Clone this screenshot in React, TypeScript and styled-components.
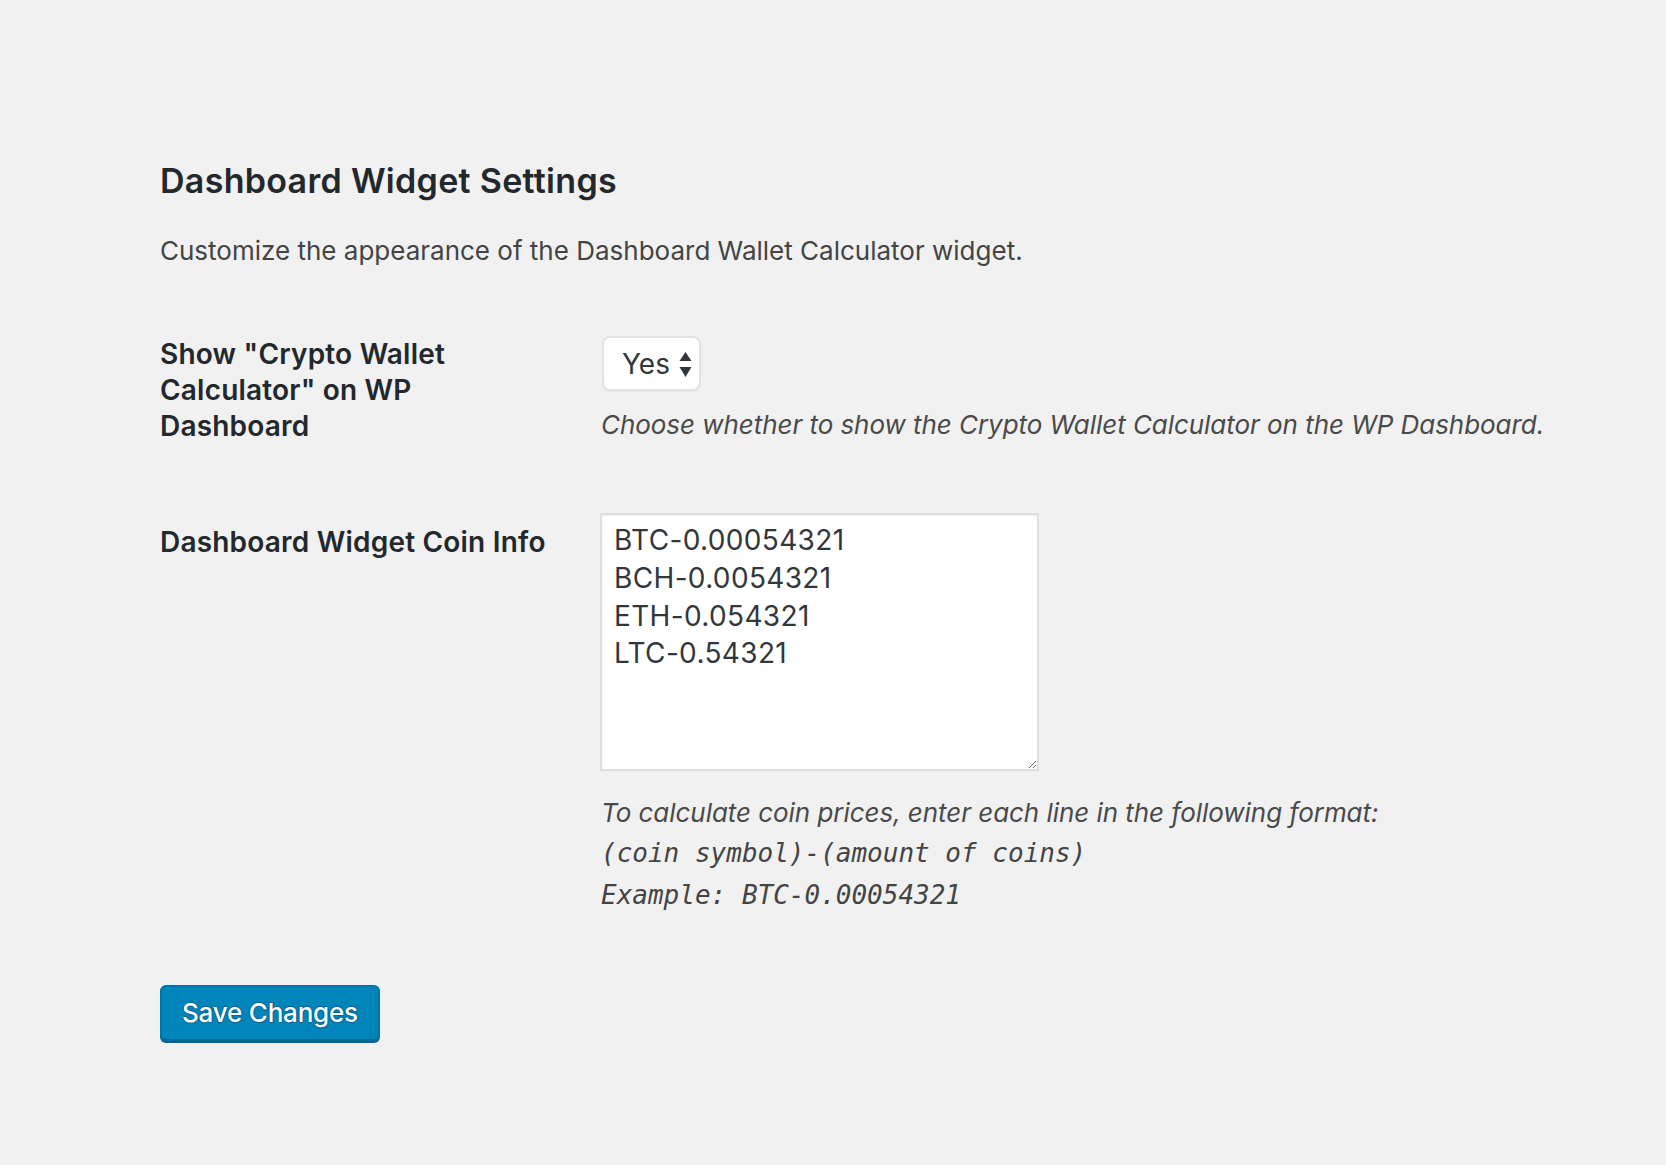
import React from "react";
import styled, { createGlobalStyle } from "styled-components";

const Global = createGlobalStyle`
  html, body {
    margin: 0;
    padding: 0;
    background: #f1f1f1;
  }
  body {
    font-family: Inter, "Noto Sans", "Liberation Sans", sans-serif;
    color: #444;
    -webkit-font-smoothing: antialiased;
  }
`;

const Page = styled.div`
  min-height: 1165px;
  box-sizing: border-box;
  padding: 159px 0 0 160px;
`;

const Title = styled.h2`
  margin: 0;
  font-size: 34px;
  line-height: 44px;
  font-weight: 600;
  color: #23282d;
  letter-spacing: 0.3px;
`;

const Intro = styled.p`
  margin: 28px 0 0;
  font-size: 26px;
  line-height: 39px;
  color: #444;
  letter-spacing: 0;
`;

const Row = styled.div<{ $gap: number }>`
  display: flex;
  align-items: flex-start;
  margin-top: ${(p) => p.$gap}px;
`;

const Label = styled.label<{ $offset: number }>`
  flex: 0 0 391px;
  margin-right: 49px;
  margin-top: ${(p) => p.$offset}px;
  font-size: 28px;
  line-height: 36px;
  font-weight: 600;
  color: #23282d;
  letter-spacing: 0.2px;
`;

const Field = styled.div`
  display: flex;
  flex-direction: column;
  align-items: flex-start;
`;

const SelectBox = styled.div`
  position: relative;
  box-sizing: border-box;
  width: 99px;
  height: 55px;
  margin: 0 0 0 2px;
  padding: 0 0 0 18px;
  display: flex;
  align-items: center;
  background: #fff;
  border: 2px solid #e2e2e2;
  border-radius: 8px;
  box-shadow: 0 1px 1px rgba(0, 0, 0, 0.03);
  font-size: 28px;
  color: #32373c;
`;

const Arrows = styled.svg`
  position: absolute;
  right: 7px;
  top: 14px;
`;

const Description = styled.p`
  margin: 14px 0 0 1px;
  font-size: 26px;
  line-height: 39px;
  font-style: italic;
  color: #4a4a4a;
  letter-spacing: -0.05px;
`;

const TextArea = styled.textarea`
  box-sizing: border-box;
  width: 439px;
  height: 258px;
  margin: 0;
  padding: 7px 12px 4px;
  border: 2px solid #dedede;
  border-radius: 0;
  background: #fff;
  box-shadow: inset 0 1px 2px rgba(0, 0, 0, 0.07);
  font-family: Inter, "Noto Sans", "Liberation Sans", sans-serif;
  font-size: 28px;
  line-height: 37.8px;
  letter-spacing: 0.35px;
  color: #32373c;
  outline: none;
`;

const Help = styled.div`
  margin: 22px 0 0 1px;
  font-style: italic;
  color: #4a4a4a;
`;

const HelpLine = styled.div`
  font-size: 26px;
  line-height: 39px;
  letter-spacing: -0.05px;
`;

const Code = styled.code<{ $lh: number }>`
  display: block;
  font-family: "DejaVu Sans Mono", "Liberation Mono", monospace;
  font-style: italic;
  font-size: 26px;
  line-height: ${(p) => p.$lh}px;
  color: #444;
`;

const Submit = styled.div`
  margin-top: 69px;
`;

const PrimaryButton = styled.button`
  box-sizing: border-box;
  height: 56px;
  padding: 0 20px 2px;
  background: #0085ba;
  border: 2px solid #0073aa;
  border-bottom-color: #006799;
  border-radius: 6px;
  box-shadow: 0 2px 0 #006799;
  color: #fff;
  font-family: Inter, "Noto Sans", "Liberation Sans", sans-serif;
  font-size: 26px;
  font-weight: 500;
  letter-spacing: -0.2px;
  text-shadow: 0 -1px 1px #006799, 1px 0 1px #006799, 0 1px 1px #006799,
    -1px 0 1px #006799;
  cursor: pointer;
`;

export default function App() {
  return (
    <>
      <Global />
      <Page>
        <Title>Dashboard Widget Settings</Title>
        <Intro>Customize the appearance of the Dashboard Wallet Calculator widget.</Intro>

        <Row $gap={66}>
          <Label $offset={0}>Show "Crypto Wallet Calculator" on WP Dashboard</Label>
          <Field>
            <SelectBox>
              Yes
              <Arrows width="13" height="26" viewBox="0 0 13 26">
                <path d="M6.5 0 L12.5 9 L0.5 9 Z" fill="#32373c" />
                <path d="M0.5 15 L12.5 15 L6.5 25 Z" fill="#32373c" />
              </Arrows>
            </SelectBox>
            <Description>
              Choose whether to show the Crypto Wallet Calculator on the WP Dashboard.
            </Description>
          </Field>
        </Row>

        <Row $gap={69}>
          <Label $offset={11}>Dashboard Widget Coin Info</Label>
          <Field>
            <TextArea
              defaultValue={"BTC-0.00054321\nBCH-0.0054321\nETH-0.054321\nLTC-0.54321"}
            />
            <Help>
              <HelpLine>To calculate coin prices, enter each line in the following format:</HelpLine>
              <Code $lh={42}>(coin symbol)-(amount of coins)</Code>
              <Code $lh={42}>Example: BTC-0.00054321</Code>
            </Help>
          </Field>
        </Row>

        <Submit>
          <PrimaryButton type="button">Save Changes</PrimaryButton>
        </Submit>
      </Page>
    </>
  );
}
